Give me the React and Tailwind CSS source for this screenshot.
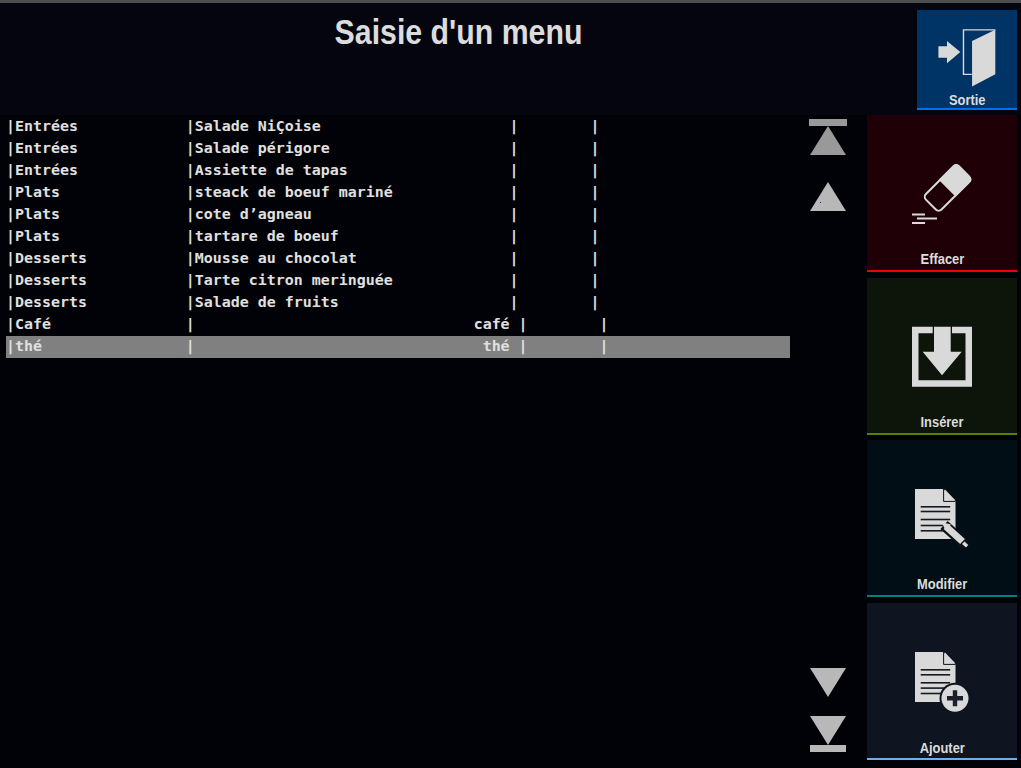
import React from 'react';

const rows = [
  ['Entrées', 'Salade NiÇoise'],
  ['Entrées', 'Salade périgore'],
  ['Entrées', 'Assiette de tapas'],
  ['Plats', 'steack de boeuf mariné'],
  ['Plats', 'cote d’agneau'],
  ['Plats', 'tartare de boeuf'],
  ['Desserts', 'Mousse au chocolat'],
  ['Desserts', 'Tarte citron meringuée'],
  ['Desserts', 'Salade de fruits'],
];

const line = (a, b) => '|' + a.padEnd(19) + '|' + b.padEnd(35) + '|' + ' '.repeat(8) + '|';
const lineRight = (a, b) => '|' + a.padEnd(19) + '|' + b.padStart(35) + ' |' + ' '.repeat(8) + '|';

const DocLines = ({ ys }) => ys.map((y) => <rect key={y} x="10.7" y={y} width="29.5" height="1.6" fill="#141a20" />);

const Doc = ({ ys }) => (
  <>
    <path d="M5 2h28.5L45.5 14v38H5z" fill="#d9d9d9" />
    <path d="M35 2.5L45 13H35z" fill="#d9d9d9" />
    <path d="M33.6 2v12.4H45.5" fill="none" stroke="#0b1218" strokeWidth="1" />
    <DocLines ys={ys} />
  </>
);

const DoorIcon = () => (
  <svg width="64" height="64" viewBox="0 0 64 64">
    <path d="M2 20.3h9v-5.6L25 26.3 11 38v-5.7H2z" fill="#d9d9d9" />
    <path d="M37 49.7h-8.7V3h33.4" fill="none" stroke="#d9d9d9" strokeWidth="1.5" />
    <path d="M37.3 14.7L61.7 3v46.7L37.3 62.3z" fill="#d9d9d9" />
  </svg>
);

const EraserIcon = () => (
  <svg width="64" height="64" viewBox="0 0 64 64">
    <g transform="rotate(-45 37.5 26)">
      <rect x="14" y="15" width="47" height="22" rx="4" fill="none" stroke="#d9d9d9" strokeWidth="2" />
      <path d="M37 14h20.5a4 4 0 0 1 4 4v16a4 4 0 0 1-4 4H37z" fill="#d9d9d9" />
    </g>
    <rect x="2" y="51.5" width="13" height="2" fill="#d9d9d9" />
    <rect x="7" y="55.5" width="20" height="2" fill="#d9d9d9" />
    <rect x="2" y="60" width="13" height="2" fill="#d9d9d9" />
  </svg>
);

const InsertIcon = () => (
  <svg width="64" height="64" viewBox="0 0 64 64">
    <path d="M2 1.7h20.7v6.5H8.5v47h47v-47H42V1.7h20v60H2z" fill="#d9d9d9" />
    <path d="M24 1.7h16.7v25h11L32 50.3 12.7 26.7H24z" fill="#d9d9d9" />
  </svg>
);

const EditIcon = () => (
  <svg width="64" height="64" viewBox="0 0 64 64">
    <Doc ys={[19, 23.7, 31.7, 37.7, 43]} />
    <path d="M34 38L56 58" stroke="#0b1218" strokeWidth="11" />
    <path d="M36 39.5L52.5 54.5" stroke="#d9d9d9" strokeWidth="7" />
    <path d="M31.7 35.3L41 37.5 35.5 43.5z" fill="#d9d9d9" />
    <path d="M54.5 54.5L58.3 58 56 60.5 52 57z" fill="#d9d9d9" />
  </svg>
);

const AddIcon = () => (
  <svg width="64" height="64" viewBox="0 0 64 64">
    <Doc ys={[19, 24, 32, 37.3, 42.7]} />
    <circle cx="45" cy="48.3" r="15.5" fill="#0e1420" />
    <circle cx="45" cy="48.3" r="13.5" fill="#d9d9d9" />
    <path d="M42.8 40.3h4.4v5.8H53v4.4h-5.8v5.8h-4.4v-5.8H37v-4.4h5.8z" fill="#1a2029" />
  </svg>
);

const ActionButton = ({ label, icon, className, labelClass = 'mt-[25px]' }) => (
  <button className={`w-[150px] h-[157px] shrink-0 flex flex-col items-center pt-[47px] border-b-2 font-['Liberation_Sans',sans-serif] ${className}`}>
    {icon}
    <span className={`${labelClass} text-[15px] leading-4 font-bold text-[#dcdcdc] scale-x-[0.86]`}>{label}</span>
  </button>
);

const Triangle = ({ down, bar, fill = '#b8b8b8' }) => (
  <svg width="38" height={bar ? 36 : 29} viewBox={bar ? '0 0 38 36' : '0 0 38 29'} className="block">
    {bar && !down && <rect x="0" y="0" width="38" height="7" fill={fill} />}
    {down ? (
      <path d="M1 0h36L19 29z" fill={fill} />
    ) : (
      <path d={bar ? 'M19 7L37 36H1z' : 'M19 0L37 29H1z'} fill={fill} />
    )}
    {bar && down && <rect x="1" y="29" width="36" height="7" fill={fill} />}
    {!bar && !down && <rect x="11" y="20" width="1" height="1" fill="#333" />}
  </svg>
);

export default function App() {
  return (
    <div className="w-[1021px] h-[768px] overflow-hidden bg-[#010207] flex flex-col">
      <div className="h-[3px] bg-[#4d4d4d]" />
      <header className="h-[112px] bg-[#04050f] flex">
        <h1 className="w-[917px] pt-[11px] text-center text-[35px] leading-9 font-bold text-[#dcdcdc] font-['Liberation_Sans',sans-serif] scale-x-[0.865]">
          Saisie d'un menu
        </h1>
        <button className="mt-[7px] w-[100px] h-[100px] bg-[#003366] border-b-2 border-[#0070e8] flex flex-col items-center pt-[17px] font-['Liberation_Sans',sans-serif]">
          <DoorIcon />
          <span className="mt-[4px] text-[15px] leading-4 font-bold text-[#dcdcdc] scale-x-[0.86]">Sortie</span>
        </button>
      </header>
      <div className="flex-1 flex min-h-0">
        <div className="w-[790px] pl-[6px] pt-px">
          {rows.map(([a, b], i) => (
            <div key={i} className="h-[22px] leading-[20px] whitespace-pre text-[14.94px] font-bold text-[#e0e0e0] font-['DejaVu_Sans_Mono',monospace]">
              {line(a, b)}
            </div>
          ))}
          <div className="h-[22px] leading-[20px] whitespace-pre text-[14.94px] font-bold text-[#e0e0e0] font-['DejaVu_Sans_Mono',monospace]">
            {lineRight('Café', 'café')}
          </div>
          <div className="h-[22px] leading-[20px] whitespace-pre text-[14.94px] font-bold text-[#e0e0e0] bg-[#808080] font-['DejaVu_Sans_Mono',monospace]">
            {lineRight('thé', 'thé')}
          </div>
        </div>
        <div className="w-[77px] h-[637px] pl-[19px] pt-[4px] flex flex-col justify-between">
          <div className="flex flex-col gap-[27px]">
            <Triangle bar fill="#999999" />
            <Triangle />
          </div>
          <div className="flex flex-col gap-[19px]">
            <Triangle down />
            <Triangle down bar />
          </div>
        </div>
        <div className="w-[150px] flex flex-col">
          <ActionButton label="Effacer" icon={<EraserIcon />} className="bg-[#1e0006] border-[#f00000]" />
          <ActionButton label="Insérer" icon={<InsertIcon />} className="mt-[6px] bg-[#0d140a] border-[#5a8008]" />
          <ActionButton label="Modifier" icon={<EditIcon />} className="mt-[5px] bg-[#020e15] border-[#008080]" />
          <ActionButton label="Ajouter" icon={<AddIcon />} labelClass="mt-[26px]" className="mt-[6px] bg-[#0e1420] border-[#6cb0f0]" />
        </div>
      </div>
    </div>
  );
}
